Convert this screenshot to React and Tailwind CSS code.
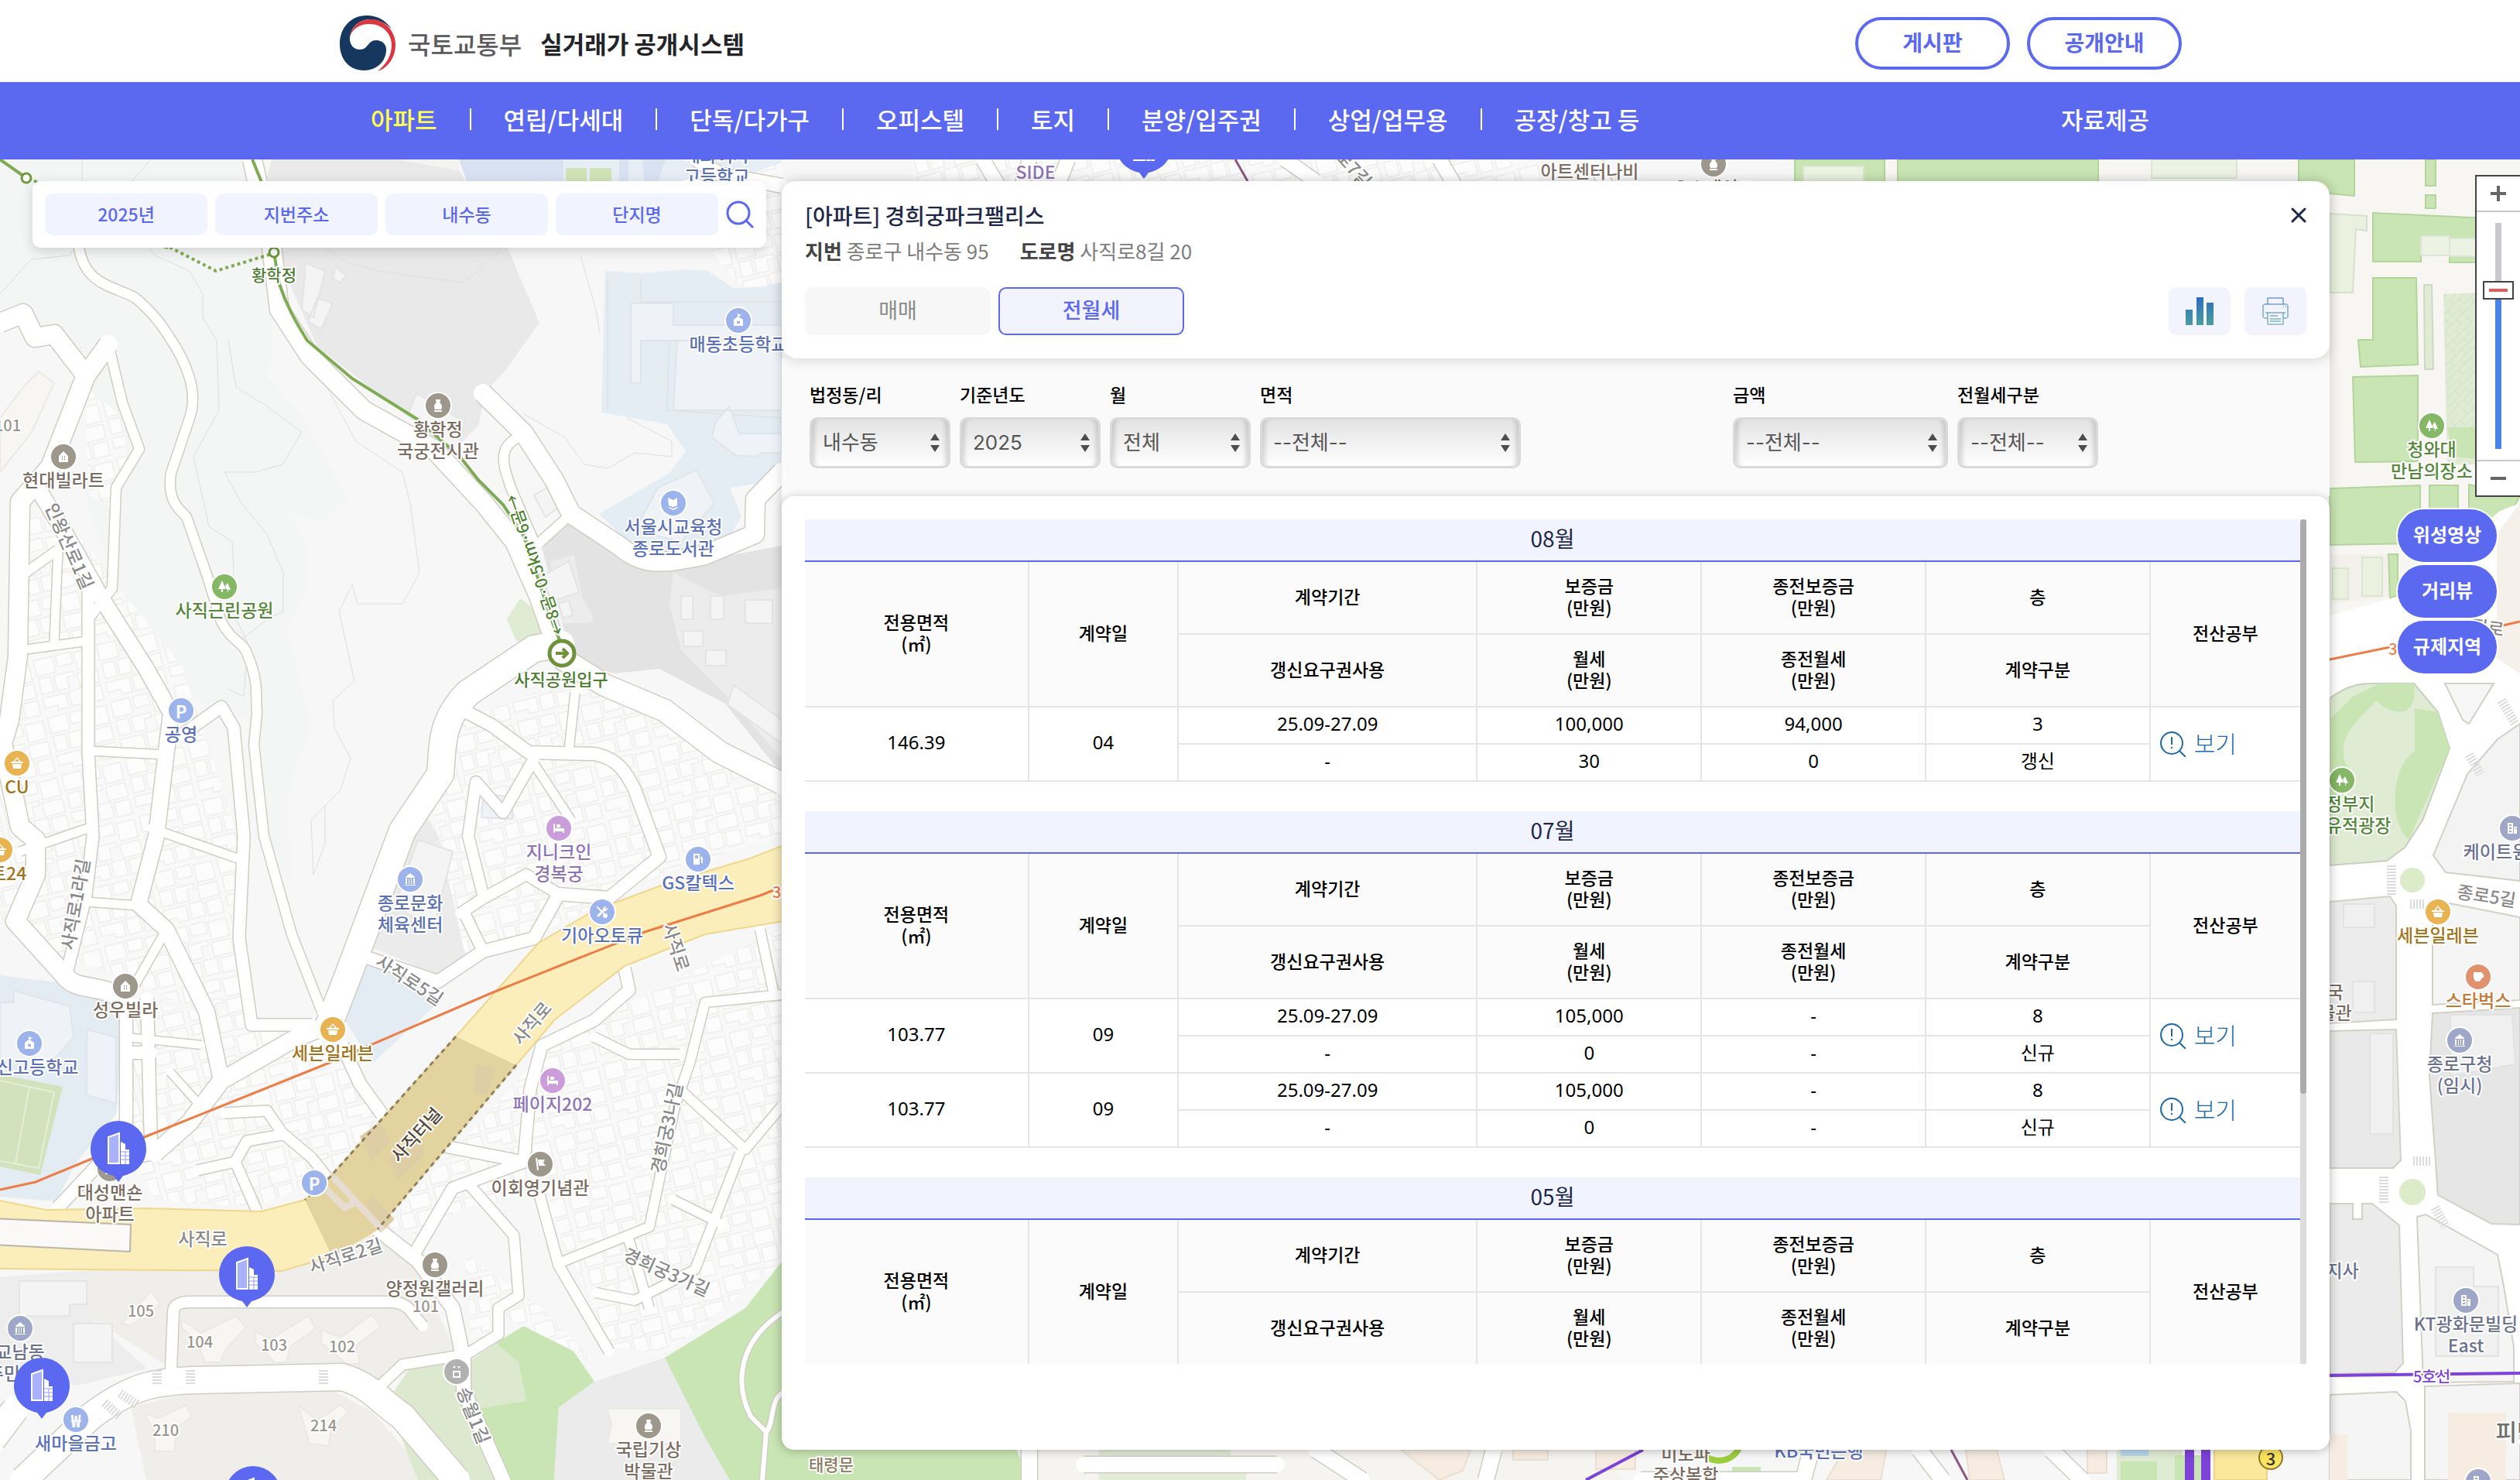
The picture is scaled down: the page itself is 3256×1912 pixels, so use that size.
import { useState } from 'react';

const FONT = "font-['Noto_Sans_CJK_KR','Noto_Sans',sans-serif]";

const menus = ['아파트', '연립/다세대', '단독/다가구', '오피스텔', '토지', '분양/입주권', '상업/업무용', '공장/창고 등'];

const months = [
  {
    name: '08월',
    deals: [
      { area: '146.39', day: '04', period: '25.09-27.09', renew: '-', deposit: '100,000', rent: '30', prevDeposit: '94,000', prevRent: '0', floor: '3', type: '갱신' },
    ],
  },
  {
    name: '07월',
    deals: [
      { area: '103.77', day: '09', period: '25.09-27.09', renew: '-', deposit: '105,000', rent: '0', prevDeposit: '-', prevRent: '-', floor: '8', type: '신규' },
      { area: '103.77', day: '09', period: '25.09-27.09', renew: '-', deposit: '105,000', rent: '0', prevDeposit: '-', prevRent: '-', floor: '8', type: '신규' },
    ],
  },
  {
    name: '05월',
    deals: [],
  },
];

/* ---------- map data ---------- */

const areas = [
  { d: 'M0 206H330L356 330L351 452L345 485L390 538L449 644L416 672L371 662L397 705V758L371 815L403 942L384 983L371 1032L376 1140L330 1080L325 930L240 900L150 760L110 640L130 520L60 430L0 410Z', fill: '#f3f6f4' },
  { d: 'M351 206H512L593 220L656 320L697 417L652 480L628 505L618 550L585 583L410 448L354 320L344 233Z', fill: '#e9e9e9' },
  { d: 'M512 206H593V220Z', fill: '#f3f3f1' },
  { d: 'M593 206H1010V370L915 350L700 320L656 320Z', fill: '#f5f5f5' },
  { d: 'M593 206H1010V480L980 300H656L603 233Z', fill: '#e6edf4' },
  { d: 'M593 206H728V234H603ZM800 206H812V234H800ZM830 206H860L850 234H832Z', fill: '#d8e2f2' },
  { d: 'M731 217H758V234H731ZM762 217H790V234H762Z', fill: '#cfe3b6' },
  { d: 'M656 320H1010V350L947 372L887 348L782 350L774 533L738 640L697 600L652 480L697 417Z', fill: '#f7f7f7' },
  { d: 'M782 350L828 353L887 348L915 350L947 372L1010 370V620L943 630L958 668L937 701L839 726L774 664L865 611L886 583L862 548L777 533Z', fill: '#e4ecf4' },
  { d: 'M738 664L800 721L839 732L924 721L1010 705V1000L937 909L852 864L794 870L755 860L729 815L716 766L696 693Z', fill: '#e3e3e3' },
  { d: 'M870 740L930 770L1010 760V980L940 900L880 840L865 780Z', fill: '#ececec' },
  { d: 'M711 725L742 717L752 770L767 800L762 805H726Z', fill: '#ececec' },
  { d: 'M672 773L698 793V833L667 828L655 800Z', fill: '#dfebd2' },
  { d: 'M543 1040L590 1120L615 1218L572 1262L478 1223Z', fill: '#ebebeb' },
  { d: 'M465 1240L572 1290L481 1374L442 1312Z', fill: '#e3ebf3' },
  { d: 'M612 1010L640 1022L665 1018V1060L605 1066Z', fill: '#e3ebf3' },
  { d: 'M0 1260L156 1279L158 1429L100 1500L72 1552L0 1546Z', fill: '#e3ebf3' },
  { d: 'M0 1388L81 1404L52 1518L0 1507Z', fill: '#d1e2bd' },
  { d: 'M117 1641H364L488 1590L540 1640L589 1746L481 1793L449 1768H221L117 1702Z', fill: '#efeeea' },
  { d: 'M0 1650L117 1641V1702L190 1768L100 1790L0 1770Z', fill: '#ededed' },
  { d: 'M169 1818L247 1799L429 1796L481 1824L559 1912H189Z', fill: '#efeeea' },
  { d: 'M533 1763H600L641 1735L706 1695L768 1785L755 1807L722 1818L716 1912H540L500 1810Z', fill: '#dde9cf' },
  { d: 'M641 1735L706 1695L768 1785L755 1807L722 1818L716 1912H640L616 1820L680 1810L670 1760Z', fill: '#c9e5b3' },
  { d: 'M768 1785L859 1754L943 1912H716L722 1818Z', fill: '#ebebeb' },
  { d: 'M1010 1630L963 1690L859 1754L911 1857L943 1912H1330L1240 1700H1010Z', fill: '#c9e5b3' },
  // east side: palace ground and downtown blocks
  { d: 'M2319 206H3256V800H2319Z', fill: '#f8f6f2' },
  { d: 'M2319 206H2435V240H2319ZM2452 206H2711V240H2452ZM2970 206H3042V253L3010 250H2970Z', fill: '#c9e5b3', line: '#b4d49c' },
  { d: 'M2330 215H2408V240H2330ZM2780 206H2890V230H2780Z', fill: '#ecf3e2', line: '#dde5d2' },
  { d: 'M3010 276L3058 279V298L3044 296L3040 378H3010Z', fill: '#eaf2df', line: '#d8dfcf' },
  { d: 'M3134 206H3147V240H3134ZM3134 252H3147V269H3134Z', fill: '#c9e5b3', line: '#b4d49c' },
  { d: 'M3066 275L3256 284V339H3165V330H3128V338H3066Z', fill: '#c9e5b3', line: '#b4d49c' },
  { d: 'M3128 305H3165V330H3128ZM3165 308H3256V331H3165Z', fill: '#ecf3e2', line: '#dfe5d5' },
  { d: 'M3066 359H3122L3124 471L3050 474L3047 439H3066Z', fill: '#c9e5b3', line: '#b4d49c' },
  { d: 'M3040 487L3124 485V596L3043 597Z', fill: '#c9e5b3', line: '#b4d49c' },
  { d: 'M3132 368H3142L3144 477H3133Z', fill: '#dfebd2', line: '#cfd8c6' },
  { d: 'M3157 380L3256 376V600H3162Z', fill: '#e0ebd3' },
  { d: 'M3162 552H3256V598L3170 590Z', fill: '#c9e5b3' },
  { d: 'M3010 631L3127 627V702L3010 704ZM3139 627H3176V720H3139ZM3190 626L3256 640L3226 700L3190 690Z', fill: '#c9e5b3', line: '#b4d49c' },
  { d: 'M3010 716H3098V770L3010 780Z', fill: '#f3f1ec' },
  { d: 'M3014 734H3034V774H3014ZM3052 720H3078V770H3052Z', fill: '#eaf2df', line: '#dde5d2' },
  { d: 'M3086 716H3098V770L3088 772Z', fill: '#c9e5b3', line: '#b4d49c' },
  { d: 'M3010 795L3100 770L3230 660L3256 650V1912H3010Z', fill: '#ffffff' },
  { d: 'M3226 690L3256 650V870L3226 850Z', fill: '#f5f1ea' },
  { d: 'M3010 902C3040 880 3060 883 3073 883H3119L3150 920L3165 967L3130 1060L3107 1095L3084 1112L3010 1118Z', fill: '#dfebd2', line: '#c9cfbf' },
  { d: 'M3010 930L3040 900L3075 883H3119C3125 930 3090 925 3070 905C3050 930 3020 945 3030 985C3050 1010 3040 1020 3010 1040ZM3120 915L3150 920L3165 967L3112 1085C3085 1060 3090 990 3120 970Z', fill: '#c9e5b3' },
  { d: 'M3159 883H3222L3190 935L3182 930Z', fill: '#f6f6f6', line: '#d3d0c8' },
  { d: 'M3227 955L3256 935V1138L3160 1127L3144 1105L3188 1000Z', fill: '#f3f3f3', line: '#d3d0c8' },
  { d: 'M3165 1167L3256 1185V1292L3143 1298V1180Z', fill: '#f5f5f5', line: '#d3d0c8' },
  { d: 'M3010 1165L3088 1158L3096 1170V1317L3010 1322Z', fill: '#ececec', line: '#d3d0c8' },
  { d: 'M3010 1332L3096 1330L3102 1499L3092 1509H3010Z', fill: '#e9e9e9', line: '#d3d0c8' },
  { d: 'M3010 1555H3040V1575H3052V1555H3065L3100 1583L3105 1761L3094 1773L3010 1775Z', fill: '#ebebeb', line: '#d3d0c8' },
  { d: 'M3143 1309L3256 1302V1582L3219 1581L3150 1544L3139 1390Z', fill: '#e6e6e6', line: '#d3d0c8' },
  { d: 'M3123 1572L3134 1569L3227 1621L3234 1656L3248 1740V1785L3131 1786Z', fill: '#f5f5f5', line: '#d3d0c8' },
  { d: 'M3010 1802L3096 1798L3108 1810L3115 1849V1912H3010Z', fill: '#f5f5f5', line: '#d3d0c8' },
  { d: 'M3133 1791L3256 1787V1912H3133Z', fill: '#f5f5f5', line: '#d3d0c8' },
  { d: 'M3163 1825H3238V1912H3163ZM3010 1853H3033V1912H3010Z', fill: '#f6ece2' },
  { d: 'M3062 1335H3092V1465H3062ZM3166 1311H3246L3250 1375L3166 1390ZM3147 1637H3196V1662H3228V1752H3147ZM3028 1168H3068V1198H3028ZM3040 1268H3068V1308H3040Z', fill: '#f0f0f0', line: '#e2e2e2' },
  // strip under the panel
  { d: 'M1330 1860H2050L2100 1912H1330Z', fill: '#f6f4f0' },
  { d: 'M1420 1873H1590V1882H1420ZM1420 1903H1610V1912H1420Z', fill: '#e2ecd6' },
  { d: 'M1810 1873H1900L1890 1900L1860 1912ZM1955 1873H2000V1886H1955ZM2062 1860H2113V1898H2062ZM2390 1860H2440L2430 1912H2360ZM2540 1873H2580L2590 1912H2545ZM2697 1860H2722V1903H2697Z', fill: '#f7ece1', line: '#eadfd3' },
  { d: 'M2735 1860H2820V1912H2735Z', fill: '#dfebd2' },
  { d: 'M2740 1888H2787V1912H2740ZM2810 1880H2855V1912H2810ZM2238 1895H2275V1912H2238Z', fill: '#c9e5b3' },
  { d: 'M2740 1860H2776V1881H2740Z', fill: '#b9d7ee' },
  { d: 'M2861 1860H2929V1912H2861Z', fill: '#fbe89a', line: '#ecd48a' },
];

const lots = [
  'M0 1000L23 900L30 660L100 690L235 860L310 1090L325 1330L120 1250L0 1200Z',
  'M600 930L725 880L850 930L1010 1020V1080L850 1130L690 1210L600 1230L560 1050Z',
  'M720 1340L1010 1200V1630L860 1750L790 1740L700 1540L600 1560L540 1600L500 1580Z',
  'M160 1290L420 1340L500 1440L420 1520L330 1560L200 1550L150 1450Z',
  'M610 1740L650 1700L770 1760L700 1690L600 1620Z',
  'M110 500L160 540L165 620L145 660L115 640Z',
  'M925 240L1010 210V365L960 372L915 320Z',
  'M1180 206H1990V236H1180Z',
];

const roads = [
  { w: 12, d: 'M102 320C110 370 150 370 175 385C205 410 215 430 228 450C245 480 255 510 245 540L221 611C215 650 235 660 241 668L267 742L286 803C300 830 315 830 319 844C335 880 330 900 332 921L328 962L341 1080L377 1207L416 1307' },
  { w: 24, d: 'M0 417L30 405L45 436L70 432L111 485M111 485L140 445M111 485L65 603L26 648L23 848L12 930L3 960L26 1068L46 1085V1130L20 1190L85 1262C100 1282 140 1270 162 1295' },
  { w: 12, d: 'M140 445L158 520L180 580L150 630L145 760L114 800M26 745L75 710' },
  { w: 20, d: 'M52 636L91 701L130 771L189 864L221 921L215 970L202 1080L179 1168L215 1201L267 1307L286 1396' },
  { w: 15, d: 'M114 758V970L120 1080L111 1157L85 1262' },
  { w: 11, d: 'M26 840L114 828M75 710L70 830M114 970L215 975M114 1070L26 1100M195 1070L310 1110M111 1165L179 1170M215 1201L170 1280L90 1270' },
  { w: 15, d: 'M234 950L286 913L302 940L315 1080L309 1212L325 1324H403' },
  { w: 34, d: 'M725 832L690 838L605 895C570 930 572 960 569 1000L520 1073L449 1262L423 1329' },
  { w: 28, d: 'M725 850L781 885L859 918L930 972L1010 1012' },
  { w: 11, d: 'M743 895L735 970M738 1060L690 987' },
  { w: 16, d: 'M605 921L637 938L683 972L768 974C800 980 810 1000 820 1020L852 1107L787 1160L722 1155L690 1212L624 1229L566 1268L468 1235' },
  { w: 14, d: 'M690 980L650 1050L615 1010L605 1080L625 1160L680 1130L722 1155M595 1180L625 1160M600 1180L624 1229' },
  { w: 24, d: 'M624 508L677 560L716 620L738 664L800 705C830 730 850 730 911 717L975 690L976 645L1010 610' },
  { w: 12, d: 'M738 664L698 700M677 562C640 575 650 600 660 630L690 700' },
  { w: 24, d: 'M326 206L351 320L361 400L400 460L470 530L560 580L625 650L665 700L696 770L718 832' },
  { w: 22, d: 'M286 1396L384 1340L423 1325M286 1396L245 1450L200 1490' },
  { w: 16, d: 'M200 1490L130 1501L75 1560M163 1285V1451L130 1501M163 1360L195 1360M190 1290L195 1480' },
  { w: 10, d: 'M163 1340L260 1350M220 1385L262 1432' },
  { w: 16, d: 'M442 1350L465 1400L494 1440' },
  { w: 13, d: 'M290 1438L345 1435L364 1463L403 1496L430 1530M364 1466L319 1474L304 1501L332 1565M255 1512L304 1501' },
  { w: 18, d: 'M488 1588L540 1629L585 1690L599 1757V1796L650 1912' },
  { w: 15, d: 'M533 1624L585 1535L677 1501L685 1407L700 1351L768 1318L813 1279L807 1251M570 1480L677 1501' },
  { w: 13, d: 'M696 1540L722 1635L787 1746M605 1529L664 1596L670 1674L644 1690V1724L602 1750L520 1763L481 1800' },
  { w: 12, d: 'M1010 1285L911 1295L891 1374L872 1429L839 1585L729 1629M768 1340L813 1362H878M878 1407L963 1485L1010 1429M956 1490L898 1640L820 1680L770 1670M839 1690L812 1600M982 1201L1000 1285M870 1550L930 1580' },
  { w: 34, d: 'M-10 1860L20 1820M30 1912L117 1830C170 1790 200 1785 250 1783L442 1779C480 1790 490 1810 520 1830L590 1912' },
  { w: 14, d: 'M221 1768L224 1695C224 1685 235 1682 245 1682H507C530 1685 530 1695 546 1713' },
  { w: 6, d: 'M1020 1690C950 1730 950 1790 970 1830L990 1850L985 1912M990 1850C1000 1840 995 1810 1010 1800' },
  { w: 18, d: 'M900 206L930 225L1010 240M1270 206L1290 240M1330 206L1320 240M1380 206L1366 240M1660 206L1700 234M1860 206L1880 240M2060 206L2075 240' },
  { w: 20, d: 'M1330 1912V1873M1700 1873L1760 1912M1930 1873L1920 1912M2120 1912H2330L2340 1873M2480 1873L2510 1912M2650 1873L2690 1912M1400 1892H1650' },
];

const YELLOW = 'M1030 1085L969 1109L865 1140L768 1176L696 1218L589 1339L426 1521L394 1550L338 1565L189 1561L59 1563L-10 1549V1639L364 1642L429 1623L488 1588L667 1376L716 1318L807 1248L911 1207L1030 1187Z';

const glyphs = {
  house: <path d="M4 9L10 3L16 9V17H4ZM8 9V11H9V9ZM11 9V11H12V9ZM8 12V14H9V12ZM11 12V14H12V12Z" fillRule="evenodd" />,
  vase: <path d="M7 2H13V4L12 6C15 8 16 12 14 15H6C4 12 5 8 8 6L7 4ZM5 16H15V18H5Z" />,
  tree: <path d="M7 2L12 13H8V17H6V13H2ZM14 5L18 14H15V17H14V14H13L11 9Z" />,
  school: <path d="M9 1L14 3L10 5L16 9V17H4V9L9 5ZM8 11V14H12V11Z" fillRule="evenodd" />,
  book: <path d="M3 3L10 6L15 3V13L10 15L4 13ZM4 15L10 17L16 15V16L10 19L4 16Z" />,
  basket: <path d="M2 8H5L10 2L15 8H18V10H2ZM4 11H16L15 17H5ZM10 4L7 8H13Z" fillRule="evenodd" />,
  bed: <path d="M3 4H5V10H17V16H15V14H5V16H3ZM7 5H12V9H7Z" />,
  gas: <path d="M4 3H12V17H4ZM6 5V9H10V5ZM13 6L16 8V15H14V10H13Z" fillRule="evenodd" />,
  tool: (
    <g>
      <path d="M5 15L12 8" stroke="#fff" strokeWidth="3" strokeLinecap="round" />
      <path d="M4 4L9 9M12 12L15 15" stroke="#fff" strokeWidth="2" strokeLinecap="round" />
      <path d="M11 5L15 2L14 6L18 5L15 9L11 9Z" />
      <circle cx="14" cy="15" r="3" />
    </g>
  ),
  hall: <path d="M10 2L16 7V8H4V7ZM4 9H6V16H4ZM8 9H9V16H8ZM11 9H12V16H11ZM14 9H16V16H14ZM3 17H17V18H3Z" />,
  flag: <path d="M4 2H6L8 18H6ZM7 4H16L14 8L17 12H8Z" />,
  building: <path d="M4 3H11V17H4ZM12 8H16V17H12ZM6 5V7H9V5ZM6 9V11H9V9ZM6 13V15H9V13ZM13 10V11H15V10Z" fillRule="evenodd" />,
  cup: <path d="M4 4H15V6H17V11H15C14 14 12 16 9 16C6 16 4 13 4 10Z" />,
  lift: <path d="M5 9H15V18H5ZM7 11V16H13V11ZM7 2L9 5H5ZM13 6L11 3H15Z" fillRule="evenodd" />,
};

const BLUE = '#9db3ec';
const BLUE_TEXT = '#5b72b8';
const BROWN = '#9e978c';
const BROWN_TEXT = '#7b6d62';
const GREEN = '#84b766';
const GREEN_TEXT = '#55883a';
const GOLD = '#e8b350';
const GOLD_TEXT = '#a2741b';
const PURPLE = '#cb9edb';
const PURPLE_TEXT = '#8d74b6';
const SLATE = '#9fa7c8';
const SLATE_TEXT = '#6c7390';
const ROAD_TEXT = '#8a8a8a';
const BLOCK_TEXT = '#9a958e';

const pois = [
  { x: 566, y: 524, icon: 'vase', bg: BROWN, color: BROWN_TEXT, lines: ['황학정', '국궁전시관'] },
  { x: 82, y: 590, icon: 'house', bg: BROWN, color: BROWN_TEXT, lines: ['현대빌라트'] },
  { x: 290, y: 758, icon: 'tree', bg: GREEN, color: GREEN_TEXT, lines: ['사직근린공원'] },
  { x: 954, y: 414, icon: 'school', bg: BLUE, color: BLUE_TEXT, lines: ['매동초등학교'] },
  { x: 870, y: 650, icon: 'book', bg: BLUE, color: BLUE_TEXT, lines: ['서울시교육청', '종로도서관'] },
  { x: 234, y: 918, letter: 'P', bg: BLUE, color: BLUE_TEXT, lines: ['공영'] },
  { x: 22, y: 986, icon: 'basket', bg: GOLD, color: GOLD_TEXT, lines: ['CU'] },
  { x: 0, y: 1098, icon: 'basket', bg: GOLD, color: GOLD_TEXT, lines: ['마트24'] },
  { x: 722, y: 1070, icon: 'bed', bg: PURPLE, color: PURPLE_TEXT, lines: ['지니크인', '경복궁'] },
  { x: 902, y: 1110, icon: 'gas', bg: BLUE, color: BLUE_TEXT, lines: ['GS칼텍스'] },
  { x: 778, y: 1178, icon: 'tool', bg: BLUE, color: BLUE_TEXT, lines: ['기아오토큐'] },
  { x: 530, y: 1136, icon: 'hall', bg: BLUE, color: BLUE_TEXT, lines: ['종로문화', '체육센터'] },
  { x: 162, y: 1274, icon: 'house', bg: BROWN, color: BROWN_TEXT, lines: ['성우빌라'] },
  { x: 38, y: 1348, icon: 'school', bg: BLUE, color: BLUE_TEXT, lines: ['대신고등학교'] },
  { x: 430, y: 1330, icon: 'basket', bg: GOLD, color: GOLD_TEXT, lines: ['세븐일레븐'] },
  { x: 714, y: 1396, icon: 'bed', bg: PURPLE, color: PURPLE_TEXT, lines: ['페이지202'] },
  { x: 698, y: 1504, icon: 'flag', bg: BROWN, color: BROWN_TEXT, lines: ['이회영기념관'] },
  { x: 142, y: 1510, icon: 'house', bg: BROWN, color: BROWN_TEXT, lines: ['대성맨숀', '아파트'] },
  { x: 406, y: 1528, letter: 'P', bg: BLUE, color: BLUE_TEXT, lines: [] },
  { x: 562, y: 1634, icon: 'vase', bg: BROWN, color: BROWN_TEXT, lines: ['양정원갤러리'] },
  { x: 26, y: 1716, icon: 'hall', bg: SLATE, color: SLATE_TEXT, lines: ['교남동', '주민센터'] },
  { x: 98, y: 1834, letter: '₩', bg: BLUE, color: BLUE_TEXT, lines: ['새마을금고'] },
  { x: 590, y: 1772, icon: 'lift', bg: '#b1b1b1', color: BROWN_TEXT, lines: [] },
  { x: 838, y: 1842, icon: 'vase', bg: BROWN, color: BROWN_TEXT, lines: ['국립기상', '박물관'] },
  { x: 2214, y: 212, icon: 'vase', bg: BROWN, color: BROWN_TEXT, lines: ['오스테이크'] },
  { x: 3142, y: 550, icon: 'tree', bg: GREEN, color: GREEN_TEXT, lines: ['청와대', '만남의장소'] },
  { x: 3026, y: 1008, icon: 'tree', bg: GREEN, color: GREEN_TEXT, lines: ['의정부지', '역사유적광장'] },
  { x: 3246, y: 1070, icon: 'building', bg: SLATE, color: SLATE_TEXT, lines: ['케이트윈타워'] },
  { x: 3150, y: 1178, icon: 'basket', bg: GOLD, color: GOLD_TEXT, lines: ['세븐일레븐'] },
  { x: 3202, y: 1262, icon: 'cup', bg: '#e0926f', color: '#c27a35', lines: ['스타벅스'] },
  { x: 3178, y: 1344, icon: 'hall', bg: SLATE, color: SLATE_TEXT, lines: ['종로구청', '(임시)'] },
  { x: 3186, y: 1680, icon: 'building', bg: SLATE, color: SLATE_TEXT, lines: ['KT광화문빌딩', 'East'] },
  { x: 3202, y: 1914, icon: 'building', bg: SLATE, color: SLATE_TEXT, lines: [] },
];

const labels = [
  { x: 354, y: 354, text: '황학정', color: '#4d7d33', size: 21 },
  { x: 725, y: 876, text: '사직공원입구', color: '#4d7d33', size: 22 },
  { x: 690, y: 730, text: '←8곰·0.5km·6곰→', color: '#4d8330', size: 21, rotate: -109 },
  { x: 926, y: 199, text: '배화여자', color: BLUE_TEXT },
  { x: 926, y: 226, text: '고등학교', color: BLUE_TEXT },
  { x: 1338, y: 221, text: 'SIDE', color: PURPLE_TEXT },
  { x: 1750, y: 217, text: '로7길', color: ROAD_TEXT, rotate: 48 },
  { x: 2054, y: 220, text: '아트센터나비', color: BROWN_TEXT },
  { x: 91, y: 705, text: '인왕산로1길', color: ROAD_TEXT, rotate: 66 },
  { x: 96, y: 1168, text: '사직로1라길', color: ROAD_TEXT, rotate: -80 },
  { x: 530, y: 1265, text: '사직로5길', color: ROAD_TEXT, rotate: 33 },
  { x: 686, y: 1321, text: '사직로', color: ROAD_TEXT, rotate: -50 },
  { x: 262, y: 1599, text: '사직로', color: ROAD_TEXT },
  { x: 446, y: 1621, text: '사직로2길', color: ROAD_TEXT, rotate: -18 },
  { x: 537, y: 1465, text: '사직터널', color: '#54493a', rotate: -48 },
  { x: 875, y: 1223, text: '사직로', color: ROAD_TEXT, rotate: 72 },
  { x: 860, y: 1457, text: '경희궁3나길', color: ROAD_TEXT, rotate: -78 },
  { x: 862, y: 1642, text: '경희궁3가길', color: ROAD_TEXT, rotate: 24 },
  { x: 613, y: 1828, text: '송월1길', color: ROAD_TEXT, rotate: 68 },
  { x: 10, y: 548, text: '101', color: BLOCK_TEXT, size: 20 },
  { x: 550, y: 1686, text: '101', color: BLOCK_TEXT, size: 20 },
  { x: 182, y: 1692, text: '105', color: BLOCK_TEXT, size: 20 },
  { x: 258, y: 1732, text: '104', color: BLOCK_TEXT, size: 20 },
  { x: 354, y: 1736, text: '103', color: BLOCK_TEXT, size: 20 },
  { x: 442, y: 1738, text: '102', color: BLOCK_TEXT, size: 20 },
  { x: 214, y: 1846, text: '210', color: BLOCK_TEXT, size: 20 },
  { x: 418, y: 1840, text: '214', color: BLOCK_TEXT, size: 20 },
  { x: 1022, y: 1151, text: '3호선', color: '#ee7d43', size: 20 },
  { x: 1074, y: 1891, text: '태령문', color: '#8b7b5f', size: 21 },
  { x: 2178, y: 1877, text: '미도파', color: BROWN_TEXT },
  { x: 2178, y: 1904, text: '주상복합', color: BROWN_TEXT },
  { x: 2350, y: 1873, text: 'KB국민은행', color: BLUE_TEXT },
  { x: 3092, y: 837, text: '3', color: '#ee7d43', size: 20 },
  { x: 3204, y: 808, text: '사직로', color: ROAD_TEXT, rotate: 8 },
  { x: 3213, y: 1156, text: '종로5길', color: ROAD_TEXT, rotate: 9 },
  { x: 3007, y: 1280, text: '고국', color: BROWN_TEXT },
  { x: 3007, y: 1307, text: '박물관', color: BROWN_TEXT },
  { x: 3016, y: 1640, text: '미지사', color: SLATE_TEXT },
  { x: 3142, y: 1777, text: '5호선', color: '#7d42d8', size: 20 },
  { x: 3266, y: 1848, text: '피맛길', color: '#6f6f6f', size: 30 },
];

const pins = [
  { x: 153, y: 1484 },
  { x: 319, y: 1646 },
  { x: 54, y: 1790 },
  { x: 327, y: 1930 },
  { x: 1478, y: 188 },
];

function MapLabel({ x, y, text, color, size = 23, rotate = 0 }) {
  return (
    <text
      x={x}
      y={y}
      fill={color}
      fontSize={size}
      textAnchor="middle"
      dominantBaseline="central"
      stroke="#fff"
      strokeWidth="4"
      strokeLinejoin="round"
      paintOrder="stroke"
      transform={`rotate(${rotate} ${x} ${y})`}
    >
      {text}
    </text>
  );
}

function Poi({ x, y, icon, letter, bg, color, lines }) {
  return (
    <g>
      <circle cx={x} cy={y} r="17" fill={bg} stroke="#fff" strokeWidth="2" />
      {icon && (
        <g fill="#fff" transform={`translate(${x - 10} ${y - 10})`}>
          {glyphs[icon]}
        </g>
      )}
      {letter && (
        <text x={x} y={y} fill="#fff" fontSize="22" fontWeight="700" textAnchor="middle" dominantBaseline="central">
          {letter}
        </text>
      )}
      {lines.map((line, i) => (
        <MapLabel key={line} x={x} y={y + 29 + i * 28} text={line} color={color} />
      ))}
    </g>
  );
}

function Pin({ x, y }) {
  return (
    <g transform={`translate(${x} ${y})`}>
      <path d="M-36 0A36 36 0 1 1 36 0C36 18 24 31 6 35L0 43L-6 35C-24 31 -36 18 -36 0Z" fill="#5b68f0" />
      <path d="M-13 -15L1 -20V19H-13Z" fill="#a9b2fb" stroke="#fff" strokeWidth="2" />
      <path d="M3 -9L9 -6V1H14V20H3Z" fill="#fff" />
      <path d="M3 4H14M3 9H14M3 14H14M9 4V20" stroke="#8f99f8" strokeWidth="1" />
    </g>
  );
}

function MapCanvas() {
  return (
    <svg
      className="absolute inset-0 h-full w-full"
      viewBox="0 206 3256 1706"
      preserveAspectRatio="xMinYMin slice"
      fontWeight="500"
      aria-hidden="true"
    >
      <defs>
        <pattern id="lots" width="84" height="76" patternUnits="userSpaceOnUse" patternTransform="rotate(-14)">
          <rect width="84" height="76" fill="#f9f9f9" />
          <path
            d="M3 3H28V24H3ZM32 3H52V18H32ZM56 5H80V28H56ZM4 28H20V48H4ZM24 28H50V34H40V48H24ZM54 32H80V50H54ZM3 53H34V72H20V66H3ZM38 52H56V72H38ZM60 54H80V73H60Z"
            fill="#fcfcfc"
            stroke="#f0f0ee"
            strokeWidth="2"
          />
        </pattern>
        <pattern id="hatch" width="22" height="16" patternUnits="userSpaceOnUse" patternTransform="rotate(-45)">
          <path d="M0 0H22M0 8H22M6 0V8M16 8V16" stroke="#d3dec6" strokeWidth="1" />
        </pattern>
      </defs>

      <rect y="206" width="3256" height="1706" fill="#f7f7f7" />
      {areas.map((area) => (
        <path key={area.d} d={area.d} fill={area.fill} stroke={area.line || 'none'} strokeWidth="2" />
      ))}
      {lots.map((d) => (
        <path key={d} d={d} fill="url(#lots)" />
      ))}
      <path d="M3157 380L3256 376V552H3162Z" fill="url(#hatch)" />

      {/* contour lines */}
      <g fill="none" stroke="#dededc" strokeWidth="1">
        <path d="M106 206V300L90 330L40 335L0 380M195 206L165 240L155 270L200 330L245 350L262 380V410L280 440L283 530L250 590L270 680L300 700L302 740L290 770L320 830L315 900L295 890" />
        <path d="M295 440L305 500L345 525L390 558L365 600L330 610L290 610L312 650L345 690L366 740V790L345 800L308 830L335 880" />
        <path d="M390 440L460 570L520 610L530 650L542 740L520 780L462 780L455 755L438 790L458 880L430 905L432 940L453 980L440 1020L402 1060L405 1130L420 1090V1040" />
        <path d="M677 535L730 565L755 600L785 605L820 585L868 590V570L810 540M420 320L450 340L490 350L560 360L600 365L645 325V300" />
        <path d="M750 330L770 400L775 430M785 358V530M828 360V390H1010M866 390L862 530L1010 540" />
      </g>
      {/* school buildings and apartment blocks */}
      <g fill="#eff3f7" stroke="#dfe5eb" strokeWidth="2">
        <path d="M875 440H1010V530H870ZM815 392H870V420H1010V440H828V495H815ZM925 545L942 525L955 560H1010V585H985L975 590L950 588L920 565ZM823 680L850 630L900 607L923 650L880 700L840 690Z" />
        <path d="M625 1025L662 1030V1058L622 1056ZM18 1280L90 1300L95 1340L60 1380L0 1370V1295H18ZM112 1330L150 1340V1425L112 1415Z" />
      </g>
      <path d="M0 1396L70 1411L50 1509L0 1500M38 1404L20 1503" fill="none" stroke="#e4efd6" strokeWidth="2" />
      <g fill="#f8f6f2" stroke="#ebe9e5" strokeWidth="2">
        <path d="M0 540L30 500L50 480L70 495L40 560L0 610ZM235 1705L260 1722L305 1700L318 1715L290 1745L285 1760H265L255 1735L235 1715ZM330 1720L350 1730L398 1700L408 1716L375 1740L370 1760H355L330 1735ZM415 1718L440 1728L480 1698L492 1714L460 1738L465 1762H448L415 1735ZM157 1710L195 1668L207 1685L170 1712ZM185 1825L205 1832L240 1815L248 1830L228 1845L225 1875H200V1850ZM385 1815L410 1835L440 1815L450 1825L428 1845L425 1868L400 1865ZM785 1820L790 1840L785 1865H880V1820Z" />
      </g>
      <g fill="#f4f4f4" stroke="#e4e4e4" strokeWidth="2">
        <path d="M540 1085L585 1100L560 1200L510 1170ZM538 508L600 545L590 590L528 535ZM395 340L420 350L405 410L390 400ZM410 385L430 392L415 425L398 415ZM433 345L447 355L440 365L430 360ZM690 750L735 725L748 765L705 780ZM722 780L735 775L740 795L727 798ZM690 640L706 630L722 655L705 668ZM880 770H895V800H880ZM918 770H935V800H918ZM963 775H998V805H963ZM883 815H908V835H883ZM912 840H938V860H912ZM948 885L1010 930V960L940 910ZM25 1655H112V1685H90V1700H25ZM95 1710H145V1760H95Z" />
      </g>

      <g fill="none" stroke="#d0cdc4" strokeLinejoin="round">
        {roads.map((road) => (
          <path key={road.d} d={road.d} strokeWidth={road.w + 3} />
        ))}
      </g>
      <g fill="none" stroke="#fff" strokeLinejoin="round" strokeLinecap="round">
        {roads.map((road) => (
          <path key={road.d} d={road.d} strokeWidth={road.w} />
        ))}
      </g>

      {/* main road and its tunnel */}
      <path d={YELLOW} fill="#fbeebb" stroke="#efd78c" strokeWidth="2" />
      <path d="M-10 1574L169 1582L168 1617L-10 1608Z" fill="#faf9f7" stroke="#b9b5a9" strokeWidth="2" />
      <path d="M589 1339L667 1376L488 1588L429 1623L394 1550L426 1521Z" fill="#e3d39f" />
      <path d="M465 1468L490 1450L505 1475L480 1500ZM500 1500L535 1465L550 1490L515 1525ZM470 1560L480 1545L510 1575L495 1590ZM615 1375L640 1380L630 1415L612 1412Z" fill="#dfcda5" />
      <path d="M420 1535L445 1560L462 1552M430 1520L495 1590" fill="none" stroke="#e6dcd0" strokeWidth="9" />
      <path d="M589 1339L426 1521L394 1550M667 1376L488 1588" fill="none" stroke="#8d8064" strokeWidth="3" strokeDasharray="6 5" />

      {/* zebra crossings */}
      <g stroke="#dcdcdc" strokeWidth="12" strokeDasharray="2 2">
        <path d="M203 1770V1790M246 1770V1790M418 1770V1790M135 1812L155 1830M155 1800L178 1815M3090 1118V1158M3114 1168H3134M3118 1500H3142M3080 1520V1556M3146 1560L3160 1585M3190 975L3205 1000M3232 905L3250 935" />
      </g>

      {/* subway and trail lines */}
      <g fill="none">
        <path d="M0 1537L46 1527L189 1468L423 1374L637 1282L833 1204L982 1157L1012 1145M3010 852L3088 836M3234 808L3256 803" stroke="#ed7d46" strokeWidth="3" />
        <path d="M3010 1777L3256 1774M2123 1873L2049 1912" stroke="#7d42d8" strokeWidth="4" />
        <path d="M2829 1870V1912M2850 1870V1912" stroke="#7d42d8" strokeWidth="12" />
        <path d="M1596 206L1612 234M2521 1873L2542 1912" stroke="#8a5a86" strokeWidth="3" />
        <path d="M326 206L351 267L354 327L361 367C372 400 385 420 397 440L455 489L540 542L595 591L618 620L650 652L677 693L696 750L712 799L725 832" stroke="#80ab55" strokeWidth="4" />
        <path d="M0 206L34 230M44 233L120 290L217 320" stroke="#80ab55" strokeWidth="4" />
        <path d="M205 312L279 350L351 328" stroke="#80ab55" strokeWidth="4" strokeDasharray="4 4" />
        <circle cx="2221" cy="1858" r="29" stroke="#9ccf3f" strokeWidth="8" />
      </g>
      <g fill="#fff" stroke="#6f9a3f" strokeWidth="3">
        <circle cx="34" cy="230" r="6" />
        <circle cx="354" cy="326" r="6" />
      </g>
      <circle cx="726" cy="844" r="16" fill="#fff" stroke="#6f9139" strokeWidth="5" />
      <path d="M718 844H733M727 838L733 844L727 850" fill="none" stroke="#6f9139" strokeWidth="4" />
      <circle cx="3117" cy="1137" r="16" fill="#dcebc8" />
      <circle cx="3117" cy="1540" r="17" fill="#dcebc8" />
      <circle cx="2934" cy="1883" r="15" fill="#fde45f" stroke="#8a7a2c" strokeWidth="2" />
      <text x="2934" y="1883" fill="#333" fontSize="22" textAnchor="middle" dominantBaseline="central">3</text>

      {pois.map((poi) => (
        <Poi key={`${poi.x}-${poi.y}`} {...poi} />
      ))}
      {labels.map((label) => (
        <MapLabel key={`${label.x}-${label.y}`} {...label} />
      ))}
      {pins.map((pin) => (
        <Pin key={`${pin.x}-${pin.y}`} {...pin} />
      ))}
    </svg>
  );
}

/* ---------- page chrome ---------- */

function Header() {
  return (
    <header className="relative z-10 shrink-0">
      <div className="bg-white">
        <div className="mx-auto flex h-[106px] max-w-[2382px] items-center justify-between pt-[6px] pl-[2px]">
          <a href="#home" className="flex items-center">
            <svg className="h-[72px] w-[72px]" viewBox="0 0 72 72" aria-hidden="true">
              <path d="M67 18C60 6 48 0 35 0C14 0 0 16 0 37C0 57 13 71 31 71C48 71 60 59 60 44C60 37 55 32 47 32C36 32 37 44 26 44C18 44 13 38 13 30C14 15 24 6 38 5C50 5 60 10 67 18Z" fill="#16385f" />
              <path d="M13 27C16 13 26 5 40 5C58 5 72 20 72 38C72 54 62 68 49 72C60 63 67 52 67 38C67 24 56 11 38 11C26 11 17 17 13 27Z" fill="#dc3741" />
            </svg>
            <span className="ml-4 text-[32px] leading-10 font-medium text-[#5c5c5c]">국토교통부</span>
            <span className="ml-6 text-[31px] leading-10 font-bold text-[#232328]">실거래가 공개시스템</span>
          </a>
          <div className="flex gap-[22px]">
            <button className="h-[68px] w-[200px] rounded-full border-4 border-[#5b68f0] bg-white pb-1 text-[28px] leading-8 font-bold text-[#5b68f0]">게시판</button>
            <button className="h-[68px] w-[200px] rounded-full border-4 border-[#5b68f0] bg-white pb-1 text-[28px] leading-8 font-bold text-[#5b68f0]">공개안내</button>
          </div>
        </div>
      </div>
      <nav className="bg-[#5b68f0] text-[31px] leading-10 font-medium text-white">
        <div className="mx-auto flex h-[100px] max-w-[2382px] items-center justify-between pb-1">
          <ul className="flex items-center">
            {menus.map((menu, i) => (
              <li key={menu} className="flex items-center">
                {i > 0 && <span className="h-7 w-[2px] bg-white" />}
                <a href="#menu" className={`px-[42px] ${i === 0 ? 'text-[#ffff4d]' : ''}`}>{menu}</a>
              </li>
            ))}
          </ul>
          <a href="#data" className="px-[42px]">자료제공</a>
        </div>
      </nav>
    </header>
  );
}

function SearchBox() {
  return (
    <div className="mt-7 ml-[42px] flex h-[86px] w-[948px] shrink-0 items-center gap-[10px] rounded-[10px] bg-white px-4 shadow-[0_4px_16px_rgba(0,0,0,0.16)]">
      {['2025년', '지번주소', '내수동', '단지명'].map((name) => (
        <button key={name} className="h-[54px] w-[210px] rounded-[10px] bg-[#f1f4ff] pb-[2px] text-[23px] leading-7 font-medium text-[#5b68f0]">
          {name}
        </button>
      ))}
      <button aria-label="검색" className="ml-auto">
        <svg className="h-9 w-9" viewBox="0 0 36 36" fill="none" stroke="#5b68f0" strokeWidth="3">
          <circle cx="16" cy="16" r="14" />
          <path d="M26 26L35 35" />
        </svg>
      </button>
    </div>
  );
}

function PanelHead({ tab, onTab }) {
  const on = 'border-2 border-[#5b68f0] bg-[#f2f3fd] text-[#5b68f0]';
  const off = 'bg-[#f7f7f7] text-[#8a8a8a]';

  return (
    <div className="relative z-10 shrink-0 rounded-[20px] bg-white px-[30px] pt-6 pb-[30px] shadow-[0_4px_16px_rgba(0,0,0,0.12)]">
      <div className="flex h-10 items-center justify-between">
        <h2 className="text-[28px] leading-10 font-medium text-[#1d2748]">[아파트] 경희궁파크팰리스</h2>
        <button aria-label="닫기">
          <svg className="h-5 w-5" viewBox="0 0 20 20" stroke="#1d2748" strokeWidth="3" strokeLinecap="round">
            <path d="M2 2L18 18M18 2L2 18" />
          </svg>
        </button>
      </div>
      <p className="mt-1 flex h-11 items-center gap-10 text-[26px] leading-10 text-[#7d7d7d]">
        <span><b className="font-bold text-[#444]">지번</b> 종로구 내수동 95</span>
        <span><b className="font-bold text-[#444]">도로명</b> 사직로8길 20</span>
      </p>
      <div className="mt-[25px] flex items-center justify-between">
        <div className="flex gap-[10px]">
          <button onClick={() => onTab('매매')} className={`h-[62px] w-[240px] rounded-[10px] pb-1 text-[27px] leading-8 ${tab === '매매' ? on : off}`}>매매</button>
          <button onClick={() => onTab('전월세')} className={`h-[62px] w-[240px] rounded-[10px] pb-1 text-[27px] leading-8 font-medium ${tab === '전월세' ? on : off}`}>전월세</button>
        </div>
        <div className="flex gap-[18px]">
          <button aria-label="통계" className="flex h-[62px] w-20 items-center justify-center rounded-[10px] bg-[#f2f3fd]">
            <svg className="h-9 w-9" viewBox="0 0 36 36" fill="url(#tone)">
              <defs>
                <linearGradient id="tone" x1="0" y1="0" x2="0" y2="36" gradientUnits="userSpaceOnUse">
                  <stop offset="0" stopColor="#2d6cc0" />
                  <stop offset="1" stopColor="#4b9f9c" />
                </linearGradient>
              </defs>
              <path d="M0 16H9V36H0ZM14 0H23V36H14ZM27 7H36V36H27Z" />
            </svg>
          </button>
          <button aria-label="인쇄" className="flex h-[62px] w-20 items-center justify-center rounded-[10px] bg-[#f2f3fd]">
            <svg className="h-9 w-[34px]" viewBox="0 0 34 36" fill="none" stroke="url(#tone)" strokeWidth="1">
              <path d="M7 9V1H27V9M7 27H3C2 27 1 26 1 25V11C1 10 2 9 3 9H31C32 9 33 10 33 11V25C33 26 32 27 31 27H27M4 20H30M7 20V35H27V20" />
              <path d="M10 24H20M10 28H24M10 31H24M27 12H28M30 12H31" />
            </svg>
          </button>
        </div>
      </div>
    </div>
  );
}

function Filter({ id, label, options, width, grow = '' }) {
  return (
    <div className={`flex flex-col ${grow}`}>
      <label htmlFor={id} className="text-[23px] leading-8 font-medium text-black">{label}</label>
      <div className={`relative mt-[14px] ${width}`}>
        <select
          id={id}
          className="h-[66px] w-full appearance-none rounded-[10px] border-[3px] border-[#dadada] bg-linear-to-b from-[#e3e3e3] to-white pl-[14px] font-['Inter','Noto_Sans_CJK_KR',sans-serif] text-[26px] leading-8 text-[#555] shadow-[inset_8px_0_6px_-5px_rgba(0,0,0,0.16),inset_-8px_0_6px_-5px_rgba(0,0,0,0.16)]"
        >
          {options.map((option) => (
            <option key={option}>{option}</option>
          ))}
        </select>
        <svg className="pointer-events-none absolute top-[21px] right-[14px] h-6 w-3" viewBox="0 0 12 24" fill="#4d4d4d">
          <path d="M6 0L12 9H0ZM0 15H12L6 24Z" />
        </svg>
      </div>
    </div>
  );
}

function Filters() {
  return (
    <div className="flex h-[178px] shrink-0 gap-3 bg-[#fafafa] pt-[30px] pl-9">
      <Filter id="dong" label="법정동/리" options={['내수동']} width="w-[182px]" />
      <Filter id="year" label="기준년도" options={['2025', '2024', '2023']} width="w-[182px]" />
      <Filter id="month" label="월" options={['전체', '08', '07', '05']} width="w-[182px]" />
      <Filter id="area" label="면적" options={['--전체--']} width="w-[337px]" grow="w-[599px]" />
      <Filter id="price" label="금액" options={['--전체--']} width="w-[278px]" />
      <Filter id="kind" label="전월세구분" options={['--전체--', '전세', '월세']} width="w-[182px]" />
    </div>
  );
}

const cell = 'border-r-2 border-b-2 border-[#e5e5e5] px-0 pt-0 pb-1 text-center';
const lastCell = 'border-b-2 border-[#e5e5e5] p-0';

function MonthTable({ month }) {
  return (
    <section className="mb-[38px]">
      <h3 className="flex h-[55px] items-center justify-center border-b-2 border-[#5b68f0] bg-[#f1f4ff] pb-[6px] text-[28px] leading-10 text-[#1d2748]">
        {month.name}
      </h3>
      <table className="w-full table-fixed border-separate border-spacing-0 text-black">
        <colgroup>
          <col className="w-[15%]" />
          <col className="w-[10%]" />
          <col className="w-[20%]" />
          <col className="w-[15%]" />
          <col className="w-[15%]" />
          <col className="w-[15%]" />
          <col className="w-[10%]" />
        </colgroup>
        <thead className="bg-[#fbfbfb] text-[23px] leading-7 font-medium">
          <tr className="h-[94px]">
            <th rowSpan={2} className={`${cell} font-medium`}>전용면적<br />(㎡)</th>
            <th rowSpan={2} className={`${cell} font-medium`}>계약일</th>
            <th className={`${cell} font-medium`}>계약기간</th>
            <th className={`${cell} font-medium`}>보증금<br />(만원)</th>
            <th className={`${cell} font-medium`}>종전보증금<br />(만원)</th>
            <th className={`${cell} font-medium`}>층</th>
            <th rowSpan={2} className="border-b-2 border-[#e5e5e5] px-0 pt-0 pb-1 font-medium">전산공부</th>
          </tr>
          <tr className="h-[94px]">
            <th className={`${cell} font-medium`}>갱신요구권사용</th>
            <th className={`${cell} font-medium`}>월세<br />(만원)</th>
            <th className={`${cell} font-medium`}>종전월세<br />(만원)</th>
            <th className={`${cell} font-medium`}>계약구분</th>
          </tr>
        </thead>
        {month.deals.map((deal, i) => (
          <tbody key={i} className="font-['Noto_Sans','Noto_Sans_CJK_KR',sans-serif] text-[24px] leading-8">
            <tr className="h-12">
              <td rowSpan={2} className={cell}>{deal.area}</td>
              <td rowSpan={2} className={cell}>{deal.day}</td>
              <td className={cell}>{deal.period}</td>
              <td className={cell}>{deal.deposit}</td>
              <td className={cell}>{deal.prevDeposit}</td>
              <td className={cell}>{deal.floor}</td>
              <td rowSpan={2} className={lastCell}>
                <a href="#view" className="flex items-center gap-[10px] pl-3 text-[30px] leading-8 font-light text-[#1f6aa8]">
                  <svg className="h-[34px] w-[34px]" viewBox="0 0 34 34" fill="none" stroke="currentColor" strokeWidth="2">
                    <circle cx="15" cy="16" r="14" />
                    <path d="M25 26L33 34M15 8V18M15 21V23" />
                  </svg>
                  보기
                </a>
              </td>
            </tr>
            <tr className="h-12">
              <td className={cell}>{deal.renew}</td>
              <td className={cell}>{deal.rent}</td>
              <td className={cell}>{deal.prevRent}</td>
              <td className={cell}>{deal.type}</td>
            </tr>
          </tbody>
        ))}
      </table>
    </section>
  );
}

function Panel() {
  const [tab, setTab] = useState('전월세');

  return (
    <main className="mt-7 mb-[39px] ml-5 flex min-w-0 flex-1 flex-col rounded-[16px] shadow-[0_0_16px_rgba(0,0,0,0.16)]">
      <PanelHead tab={tab} onTab={setTab} />
      <Filters />
      <div className="relative flex min-h-0 flex-1 rounded-[16px] bg-white px-[30px] pt-[30px] pb-[111px] shadow-[0_0_12px_rgba(0,0,0,0.16)]">
        <div className="min-w-0 flex-1 overflow-hidden">
          {months.map((month) => (
            <MonthTable key={month.name} month={month} />
          ))}
        </div>
        <div className="w-2 bg-[#dcdcdc]">
          <div className="h-[68%] rounded-full bg-[#ababab]" />
        </div>
      </div>
    </main>
  );
}

function ZoomControl() {
  const [level, setLevel] = useState(72);

  return (
    <div className="mt-5 flex w-[58px] flex-col items-center border-y-2 border-l-2 border-[#444] bg-white">
      <button aria-label="확대" onClick={() => setLevel(Math.min(100, level + 7))} className="flex h-[46px] w-full items-center justify-center border-b-2 border-[#c9c9cd]">
        <svg className="h-5 w-5" viewBox="0 0 20 20" stroke="#666" strokeWidth="4"><path d="M0 10H20M10 0V20" /></svg>
      </button>
      <div className="py-[14px]">
        <input
          type="range"
          aria-label="지도 확대 단계"
          min="0"
          max="100"
          value={level}
          onChange={(e) => setLevel(Number(e.target.value))}
          style={{ backgroundImage: `linear-gradient(to top, #4a83e8 ${level}%, #c9c9cd ${level}%)` }}
          className="block h-[292px] w-10 appearance-none bg-[length:8px_100%] bg-center bg-no-repeat [direction:rtl] [writing-mode:vertical-lr] [&::-webkit-slider-thumb]:h-6 [&::-webkit-slider-thumb]:w-10 [&::-webkit-slider-thumb]:appearance-none [&::-webkit-slider-thumb]:border-2 [&::-webkit-slider-thumb]:border-[#444] [&::-webkit-slider-thumb]:bg-white [&::-webkit-slider-thumb]:bg-[linear-gradient(#e25c5c,#e25c5c)] [&::-webkit-slider-thumb]:bg-[length:24px_4px] [&::-webkit-slider-thumb]:bg-center [&::-webkit-slider-thumb]:bg-no-repeat"
        />
      </div>
      <button aria-label="축소" onClick={() => setLevel(Math.max(0, level - 7))} className="flex h-[46px] w-full items-center justify-center border-t-2 border-[#c9c9cd]">
        <svg className="h-5 w-5" viewBox="0 0 20 20" stroke="#666" strokeWidth="4"><path d="M0 10H20" /></svg>
      </button>
    </div>
  );
}

function MapTools() {
  return (
    <aside className="flex w-[246px] shrink-0 flex-col items-end">
      <ZoomControl />
      <div className="mt-[14px] mr-7 flex flex-col">
        {['위성영상', '거리뷰', '규제지역'].map((name) => (
          <button key={name} className="h-[72px] w-[132px] rounded-full border-2 border-white bg-[#5b68f0] pb-1 text-[24px] leading-7 font-bold text-white">
            {name}
          </button>
        ))}
      </div>
    </aside>
  );
}

export default function App() {
  return (
    <div className={`flex h-screen flex-col overflow-hidden ${FONT}`}>
      <Header />
      <div className="relative min-h-0 flex-1 overflow-hidden">
        <MapCanvas />
        <div className="relative flex h-full items-start">
          <SearchBox />
          <div className="flex h-full min-w-0 flex-1">
            <Panel />
          </div>
          <MapTools />
        </div>
      </div>
    </div>
  );
}
